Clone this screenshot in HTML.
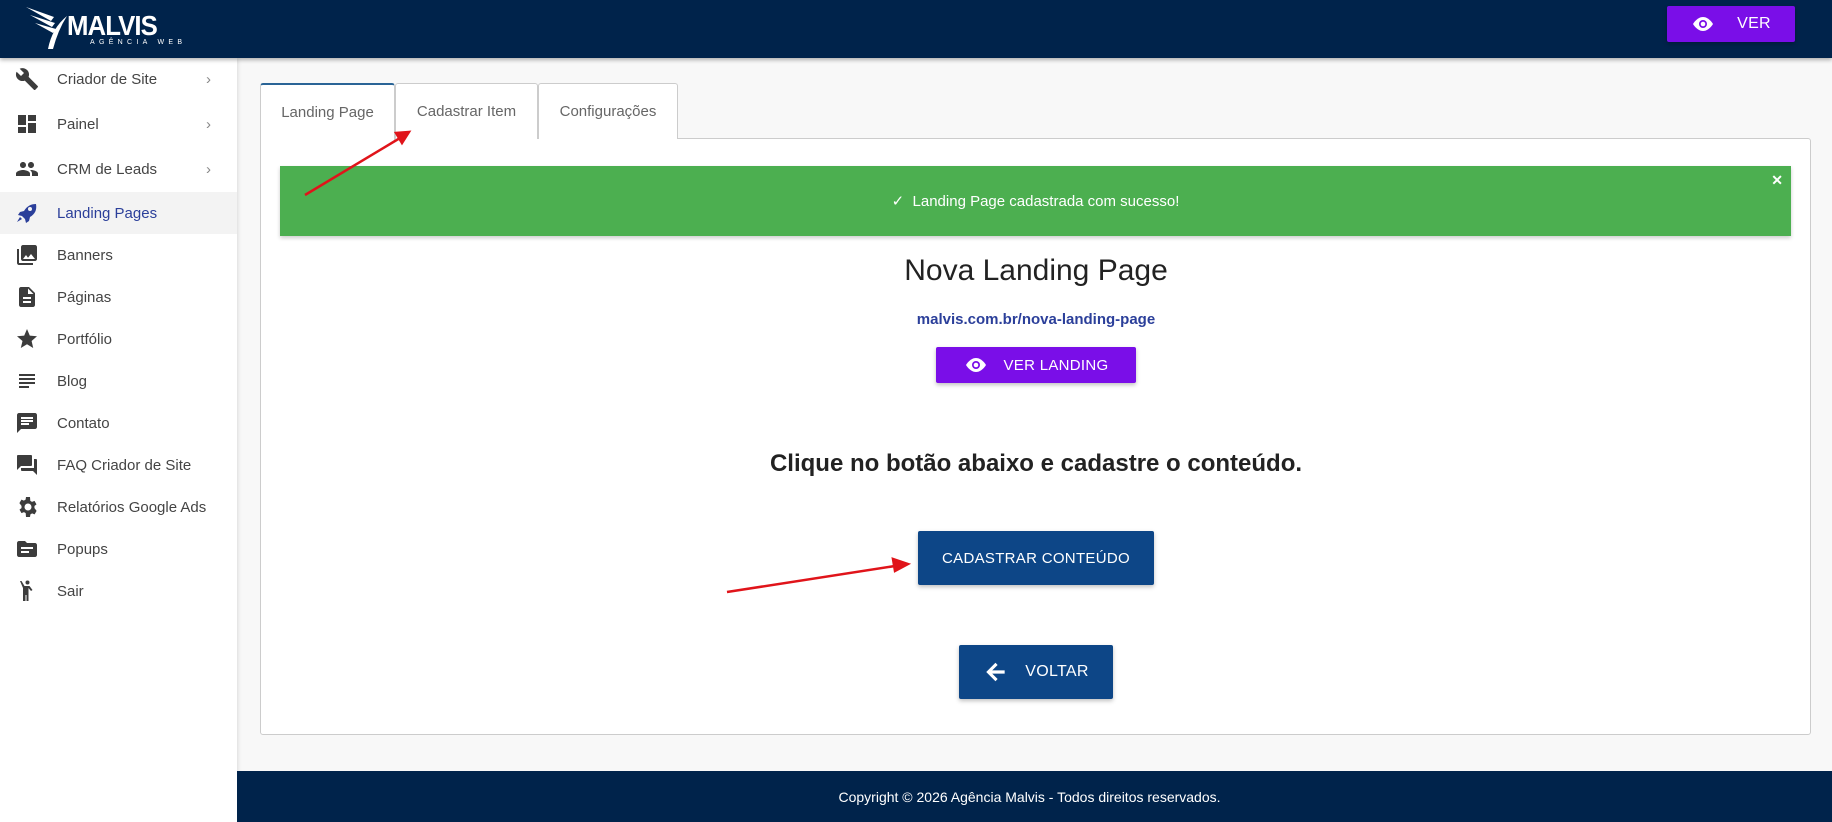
<!DOCTYPE html>
<html><head><meta charset="utf-8"><style>
*{box-sizing:border-box;margin:0;padding:0}
body{width:1832px;height:822px;overflow:hidden;background:#f8f8f8;font-family:"Liberation Sans",sans-serif;position:relative}
.hdr{position:absolute;left:0;top:0;width:1832px;height:58px;background:#00234b;box-shadow:0 2px 4px rgba(0,0,0,.3);z-index:2}
.side{position:absolute;left:0;top:58px;width:237px;height:764px;background:#fff;box-shadow:1px 0 4px rgba(0,0,0,.12)}
.it{position:absolute;left:0;width:237px;height:42px;display:flex;align-items:center;font-size:15px;color:#444}
.it svg{position:absolute;left:15px;width:24px;height:24px;fill:#3c3c3c}
.it span{position:absolute;left:57px}
.it .ch{position:absolute;left:206px;color:#888;font-size:15px}
.act{background:#f3f3f3;color:#2b3f9a}
.btn{position:absolute;color:#fff;display:flex;align-items:center;justify-content:center;font-size:15px;line-height:1;box-shadow:0 2px 4px rgba(0,0,0,.25);border-radius:2px;letter-spacing:.3px}
.tab{position:absolute;top:83px;height:56px;border:1px solid #ccc;border-bottom:none;background:#fff;font-size:15px;color:#666;display:flex;align-items:center;justify-content:center;border-radius:3px 3px 0 0}
</style></head><body>
<div class="hdr">
 <svg style="position:absolute;left:24px;top:4px" width="44" height="46" viewBox="0 0 44 46"><path d="M2 3 L30 13 L27 17 Z M6 11 L31 19 L28 23 Z M11 19 L32 25 L29 29 Z M24 45 Q28 24 43 12 Q34 26 29 45 Z" fill="#fff"/></svg>
 <div style="position:absolute;left:67px;top:10px;color:#fff;font-size:28px;font-weight:bold;letter-spacing:-1px;transform:scaleX(.92);transform-origin:left">MALVIS</div>
 <div style="position:absolute;left:90px;top:39px;color:#fff;font-size:7px;letter-spacing:4.3px">AGÊNCIA WEB</div>
 <div class="btn" style="left:1667px;top:6px;width:128px;height:36px;background:#7a0ee8;font-size:16px"><svg width="24" height="24" viewBox="0 0 24 24" style="margin-right:22px"><path d="M12 5C6 5 2 12 2 12s4 7 10 7 10-7 10-7-4-7-10-7z" fill="#fff"/><circle cx="12" cy="12" r="4" fill="#7a0ee8"/><circle cx="12" cy="12" r="2.3" fill="#fff"/></svg><span>VER</span></div>
</div>
<div class="side">
 <div class="it" style="top:0"><svg viewBox="0 0 24 24"><path d="M22.7 19l-9.1-9.1c.9-2.3.4-5-1.5-6.9-2-2-5-2.4-7.4-1.3L9 6 6 9 1.6 4.7C.4 7.1.9 10.1 2.9 12.1c1.9 1.9 4.6 2.4 6.9 1.5l9.1 9.1c.4.4 1 .4 1.4 0l2.3-2.3c.5-.4.5-1.1.1-1.4z"/></svg><span>Criador de Site</span><span class="ch">›</span></div>
 <div class="it" style="top:45px"><svg viewBox="0 0 24 24"><path d="M3 13h8V3H3zm0 8h8v-6H3zm10 0h8V11h-8zm0-18v6h8V3z"/></svg><span>Painel</span><span class="ch">›</span></div>
 <div class="it" style="top:90px"><svg viewBox="0 0 24 24"><path d="M16 11c1.7 0 3-1.3 3-3s-1.3-3-3-3-3 1.3-3 3 1.3 3 3 3zm-8 0c1.7 0 3-1.3 3-3S9.7 5 8 5 5 6.3 5 8s1.3 3 3 3zm0 2c-2.3 0-7 1.2-7 3.5V19h14v-2.5C15 14.2 10.3 13 8 13zm8 0c-.3 0-.6 0-1 .1 1.2.8 2 2 2 3.4V19h6v-2.5c0-2.3-4.7-3.5-7-3.5z"/></svg><span>CRM de Leads</span><span class="ch">›</span></div>
 <div class="it act" style="top:134px"><svg viewBox="0 0 24 24" style="fill:#2b3f9a"><path d="M21 3c-5 0-9 2-12 7l-4 1-2 3 4 1 3 3 1 4 3-2 1-4c5-3 7-7 6-13zM15 10a2 2 0 110-4 2 2 0 010 4zM5 16l-3 5 5-3z"/></svg><span>Landing Pages</span></div>
 <div class="it" style="top:176px"><svg viewBox="0 0 24 24"><path d="M22 16V4c0-1.1-.9-2-2-2H8c-1.1 0-2 .9-2 2v12c0 1.1.9 2 2 2h12c1.1 0 2-.9 2-2zm-11-4l2 2.7 3-3.7 4 5H8zM2 6v14c0 1.1.9 2 2 2h14v-2H4V6z"/></svg><span>Banners</span></div>
 <div class="it" style="top:218px"><svg viewBox="0 0 24 24"><path d="M14 2H6c-1.1 0-2 .9-2 2v16c0 1.1.9 2 2 2h12c1.1 0 2-.9 2-2V8zm2 16H8v-2h8zm0-4H8v-2h8zm-3-5V3.5L18.5 9z"/></svg><span>Páginas</span></div>
 <div class="it" style="top:260px"><svg viewBox="0 0 24 24"><path d="M12 17.3l6.2 3.7-1.6-7L22 9.2l-7.2-.6L12 2 9.2 8.6 2 9.2 7.5 14l-1.7 7z"/></svg><span>Portfólio</span></div>
 <div class="it" style="top:302px"><svg viewBox="0 0 24 24"><path d="M14 17H4v2h10zm6-8H4v2h16zM4 15h16v-2H4zM4 5v2h16V5z"/></svg><span>Blog</span></div>
 <div class="it" style="top:344px"><svg viewBox="0 0 24 24"><path d="M20 2H4c-1.1 0-2 .9-2 2v18l4-4h14c1.1 0 2-.9 2-2V4c0-1.1-.9-2-2-2zM6 9h12v2H6zm8 5H6v-2h8zm4-6H6V6h12z"/></svg><span>Contato</span></div>
 <div class="it" style="top:386px"><svg viewBox="0 0 24 24"><path d="M21 6h-2v9H6v2c0 .6.4 1 1 1h11l4 4V7c0-.6-.4-1-1-1zm-4 6V3c0-.6-.4-1-1-1H3c-.6 0-1 .4-1 1v14l4-4h10c.6 0 1-.4 1-1z"/></svg><span>FAQ Criador de Site</span></div>
 <div class="it" style="top:428px"><svg viewBox="0 0 24 24"><path d="M19.4 13c0-.3.1-.6.1-1s0-.7-.1-1l2.1-1.6-2-3.5-2.5 1c-.5-.4-1.1-.7-1.700-1L15 2h-4l-.4 2.6c-.6.3-1.2.6-1.7 1l-2.5-1-2 3.5L6.6 11c0 .3-.1.6-.1 1s0 .7.1 1l-2.1 1.6 2 3.5 2.5-1c.5.4 1.1.7 1.7 1L11 22h4l.4-2.6c.6-.3 1.2-.6 1.7-1l2.5 1 2-3.5zM13 15.5a3.5 3.5 0 110-7 3.5 3.5 0 010 7z"/></svg><span>Relatórios Google Ads</span></div>
 <div class="it" style="top:470px"><svg viewBox="0 0 24 24"><path d="M20 6h-8l-2-2H4c-1.1 0-2 .9-2 2v12c0 1.1.9 2 2 2h16c1.1 0 2-.9 2-2V8c0-1.1-.9-2-2-2zm-6 10H6v-2h8zm4-4H6v-2h12z"/></svg><span>Popups</span></div>
 <div class="it" style="top:512px"><svg viewBox="0 0 24 24"><path d="M12.5 5.5a2 2 0 100-4 2 2 0 000 4zM5 2l1.5 0 3 5h5l3 4-1.5 1-2.5-3v13h-2v-6h-1v6H8V9z"/></svg><span>Sair</span></div>
</div>
<div style="position:absolute;left:260px;top:138px;width:1551px;height:597px;background:#fff;border:1px solid #ccc;border-radius:0 3px 3px 3px"></div>
<div class="tab" style="left:260px;width:135px;border-top:2px solid #2a6496;height:57px">Landing Page</div>
<div class="tab" style="left:395px;width:143px">Cadastrar Item</div>
<div class="tab" style="left:538px;width:140px">Configurações</div>
<div style="position:absolute;left:280px;top:166px;width:1511px;height:70px;background:#4caf50;box-shadow:0 2px 4px rgba(0,0,0,.2);color:#fff;font-size:15px;display:flex;align-items:center;justify-content:center">✓&nbsp; Landing Page cadastrada com sucesso!<span style="position:absolute;right:8px;top:6px;font-weight:bold;font-size:14px">✕</span></div>
<div style="position:absolute;left:0;width:2072px;top:254px;text-align:center;font-size:30px;color:#222">Nova Landing Page</div>
<div style="position:absolute;left:0;width:2072px;top:311px;text-align:center;font-size:15px;font-weight:bold;color:#2b3f9a">malvis.com.br/nova-landing-page</div>
<div class="btn" style="left:936px;top:347px;width:200px;height:36px;background:#7a0ee8"><svg width="24" height="24" viewBox="0 0 24 24" style="margin-right:16px"><path d="M12 5C6 5 2 12 2 12s4 7 10 7 10-7 10-7-4-7-10-7z" fill="#fff"/><circle cx="12" cy="12" r="4" fill="#7a0ee8"/><circle cx="12" cy="12" r="2.3" fill="#fff"/></svg><span>VER LANDING</span></div>
<div style="position:absolute;left:0;width:2072px;top:450px;text-align:center;font-size:24px;font-weight:bold;color:#222">Clique no botão abaixo e cadastre o conteúdo.</div>
<div class="btn" style="left:918px;top:531px;width:236px;height:54px;background:#0d4687">CADASTRAR CONTEÚDO</div>
<div class="btn" style="left:959px;top:645px;width:154px;height:54px;background:#0d4687;font-size:16px"><svg width="26" height="26" viewBox="0 0 24 24" style="margin-right:16px"><path d="M20 10.5H8.5l5-5L11.5 3.5 3 12l8.5 8.5 2-2-5-5H20z" fill="#fff"/></svg><span>VOLTAR</span></div>
<svg style="position:absolute;left:0;top:0" width="1832" height="822"><g stroke="#e0141a" stroke-width="2.5" fill="#e0141a"><line x1="305" y1="195" x2="400" y2="138"/><polygon points="409,132 396,133 402,143"/><line x1="727" y1="592" x2="895" y2="566"/><polygon points="908,564 893,559 895,571"/></g></svg>
<div style="position:absolute;left:237px;top:771px;width:1595px;height:51px;background:#00234b;color:#fff;font-size:14px;display:flex;align-items:center;justify-content:center;padding-right:10px">Copyright © 2026 Agência Malvis - Todos direitos reservados.</div>
</body></html>
